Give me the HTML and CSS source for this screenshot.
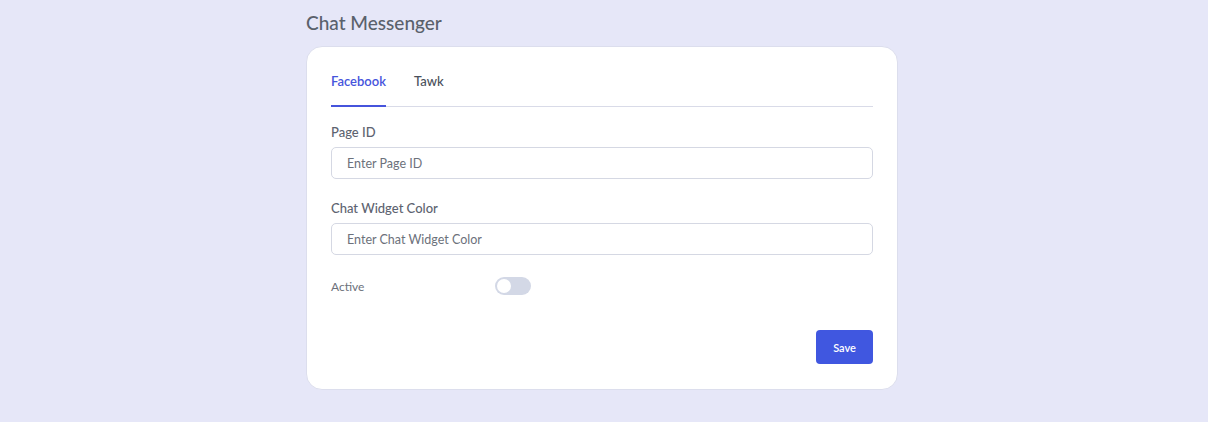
FILE: index.html
```html
<!DOCTYPE html>
<html>
<head>
<meta charset="utf-8">
<link rel="stylesheet" href="styles.css">
</head>
<body>
<div class="page">
  <h1 class="title">Chat Messenger</h1>
  <div class="card">
    <div class="tabs">
      <div class="tab active">Facebook</div>
      <div class="tab">Tawk</div>
    </div>
    <div class="field">
      <label class="label">Page ID</label>
      <input class="input" type="text" placeholder="Enter Page ID">
    </div>
    <div class="field">
      <label class="label">Chat Widget Color</label>
      <input class="input" type="text" placeholder="Enter Chat Widget Color">
    </div>
    <div class="toggle-row">
      <span class="toggle-label">Active</span>
      <span class="switch"><span class="knob"></span></span>
    </div>
    <div class="actions">
      <button class="btn">Save</button>
    </div>
  </div>
</div>
</body>
</html>
```

FILE: styles.css
```css
* { box-sizing: border-box; }
html, body { margin: 0; padding: 0; }
body {
  background: #e6e7f8;
  font-family: "Lato", "Noto Sans", sans-serif;
  color: #5d6370;
}
.page {
  width: 592px;
  padding-top: 11px;
  margin-left: 306px;
}
.title {
  margin: 0 0 11px 0;
  font-size: 19px;
  line-height: 24px;
  font-weight: 500;
  color: #5a616c;
}
.card {
  background: #fff;
  border: 1px solid #dcdeed;
  border-radius: 16px;
  padding: 23px 24px 24px 24px;
  height: 344px;
}
.tabs {
  display: flex;
  gap: 28px;
  border-bottom: 1px solid #d9dbe8;
}
.tab {
  font-size: 13px;
  font-weight: 600;
  color: #4a505b;
  padding: 3px 0 16px 0;
  border-bottom: 2px solid transparent;
  margin-bottom: -1px;
}
.tab.active {
  color: #4654dc;
  border-bottom-color: #4654dc;
}
.tab:not(.active) { font-weight: 500; }
.field {
  display: flex;
  flex-direction: column;
  margin-top: 17px;
}
.field + .field { margin-top: 21px; }
.label {
  font-size: 13px;
  font-weight: 500;
  color: #5d6370;
  line-height: 16px;
  margin-bottom: 7px;
}
.input {
  height: 32px;
  border: 1px solid #d5d8e3;
  border-radius: 5px;
  padding: 0 15px;
  font-family: inherit;
  font-size: 12.5px;
  color: #333;
  outline: none;
}
.input::placeholder { color: #6c717b; }
.toggle-row {
  display: flex;
  align-items: center;
  margin-top: 22px;
  height: 18px;
}
.toggle-label {
  width: 164px;
  font-size: 12px;
  color: #6c717b;
}
.switch {
  width: 36px;
  height: 18px;
  border-radius: 9px;
  background: #d3d8e6;
  position: relative;
}
.knob {
  position: absolute;
  left: 2px;
  top: 2px;
  width: 14px;
  height: 14px;
  border-radius: 50%;
  background: #fff;
}
.actions {
  display: flex;
  justify-content: flex-end;
  margin-top: 35px;
}
.btn {
  width: 57px;
  height: 34px;
  border: none;
  border-radius: 4px;
  background: #4057e0;
  color: #fff;
  font-family: inherit;
  font-size: 11px;
  font-weight: 600;
}
```
